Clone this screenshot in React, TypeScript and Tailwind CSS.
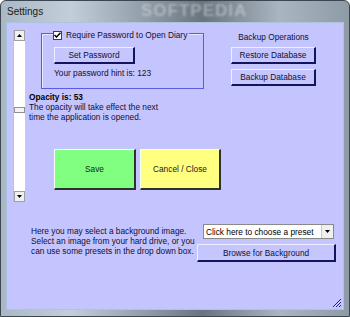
import React from 'react';

function WinButton({ children, className = '' }: { children: React.ReactNode; className?: string }) {
  return (
    <div
      className={`flex items-center justify-center bg-[#c6c6ff] border-t border-l border-[#eeeeff] border-r-2 border-b-2 border-r-[#14145e] border-b-[#14145e] text-[#101030] ${className}`}
    >
      {children}
    </div>
  );
}

function BigButton({ children, className = '' }: { children: React.ReactNode; className?: string }) {
  return (
    <div
      className={`flex items-center justify-center border-t border-l border-[#f4fff4] border-r-2 border-b-2 border-r-[#303030] border-b-[#303030] text-[#202020] ${className}`}
    >
      {children}
    </div>
  );
}

export default function App() {
  return (
    <div className="w-[350px] h-[317px] flex flex-col overflow-hidden rounded-t-[6px] border border-[#3c4650] bg-[linear-gradient(to_right,#aab8c6,#c2ced9_20%,#8f9ba7_42%,#6a747e_58%,#a9b5c1_80%,#8e9aa6)] font-['Liberation_Sans',Arial,sans-serif] text-[8.3px] leading-[10px] text-black">
      {/* title bar */}
      <div className="relative h-[21px] flex items-center px-[6px] overflow-hidden">
        <span className="text-[10px] text-[#1a1a1a] z-10">Settings</span>
        <span className="absolute left-[140px] top-[1px] text-[17px] leading-[18px] font-bold text-white/35 blur-[1px] tracking-[1px]">SOFTPEDIA</span>
      </div>

      {/* client area */}
      <div className="relative flex-1 mx-[5px] mb-[6px] border border-[#a9c4dc] bg-[#c4c4fe] flex flex-col">
        <div className="flex items-start">
          {/* scrollbar */}
          <div className="ml-[6px] mt-[7px] w-[12px] h-[172px] bg-white border-l border-[#c0c0c0] flex flex-col">
            <div className="h-[11px] bg-[#f0f0f0] border border-[#a0a0a0] flex items-center justify-center">
              <svg width="5" height="3" viewBox="0 0 5 3"><path d="M2.5 0L5 3H0Z" fill="#000" /></svg>
            </div>
            <div className="mt-[66px] h-[6px] bg-[#f4f4f4] border border-[#909090]" />
            <div className="flex-1" />
            <div className="h-[11px] bg-[#f0f0f0] border border-[#a0a0a0] flex items-center justify-center">
              <svg width="5" height="3" viewBox="0 0 5 3"><path d="M0 0H5L2.5 3Z" fill="#000" /></svg>
            </div>
          </div>

          {/* main column */}
          <div className="ml-[4px] flex flex-col">
            <div className="flex items-start mt-[10px]">
              {/* group box */}
              <div className="relative ml-[12px] w-[163px] h-[56px] border border-[#5a5ae6] shadow-[inset_1px_1px_0_#e8e8ff]">
                <div className="absolute -top-[4px] left-[11px] flex items-center gap-[4px] bg-[#c4c4fe] pr-[2px]">
                  <div className="w-[9px] h-[9px] bg-white border border-[#404040] flex items-center justify-center">
                    <svg width="7" height="6" viewBox="0 0 7 6"><path d="M0.5 3L2.5 5L6.5 0.8" stroke="#000" strokeWidth="1.5" fill="none" /></svg>
                  </div>
                  <span className="text-[#101030]">Require Password to Open Diary</span>
                </div>
                <WinButton className="ml-[12px] mt-[13px] w-[81px] h-[17px]">Set Password</WinButton>
                <div className="ml-[12px] mt-[4px] text-[#101030]">Your password hint is: 123</div>
              </div>

              {/* backup */}
              <div className="ml-[27px] w-[85px] flex flex-col items-center">
                <div className="-mt-[1px] text-[#101030]">Backup Operations</div>
                <WinButton className="mt-[5px] w-[85px] h-[17px]">Restore Database</WinButton>
                <WinButton className="mt-[5px] w-[85px] h-[17px]">Backup Database</WinButton>
              </div>
            </div>

            <div className="mt-[3px] font-bold">Opacity is: 53</div>
            <div className="text-[#101030]">The opacity will take effect the next</div>
            <div className="text-[#101030]">time the application is opened.</div>

            <div className="mt-[27px] flex">
              <BigButton className="ml-[25px] w-[82px] h-[41px] bg-[#80ff80]">Save</BigButton>
              <BigButton className="ml-[4px] w-[81px] h-[41px] bg-[#ffff80]">Cancel / Close</BigButton>
            </div>
          </div>
        </div>

        {/* bottom section */}
        <div className="mt-[24px] flex items-start">
          <div className="ml-[24px] w-[166px] text-[#101030]">
            <div>Here you may select a background image.</div>
            <div>Select an image from your hard drive, or you</div>
            <div>can use some presets in the drop down box.</div>
          </div>
          <div className="-mt-[2px] w-[139px] flex flex-col">
            <div className="ml-[6px] w-[131px] h-[15px] bg-white border border-[#8a8a8a] flex items-center">
              <span className="flex-1 pl-[2px] text-black">Click here to choose a preset</span>
              <div className="w-[12px] h-[13px] bg-[#f0f0f0] border-l border-[#c8c8c8] flex items-center justify-center">
                <svg width="5" height="3" viewBox="0 0 5 3"><path d="M0 0H5L2.5 3Z" fill="#000" /></svg>
              </div>
            </div>
            <WinButton className="mt-[5px] w-[139px] h-[18px]">Browse for Background</WinButton>
          </div>
        </div>

        {/* size grip */}
        <svg className="absolute right-[1px] bottom-[1px]" width="10" height="10" viewBox="0 0 10 10">
          <path d="M9 1L1 9M9 4L4 9M9 7L7 9" stroke="#1a1aa0" strokeWidth="1" />
          <path d="M9 2.5L2.5 9M9 5.5L5.5 9" stroke="#ffffff" strokeWidth="0.6" opacity="0.6" />
        </svg>
      </div>
    </div>
  );
}
